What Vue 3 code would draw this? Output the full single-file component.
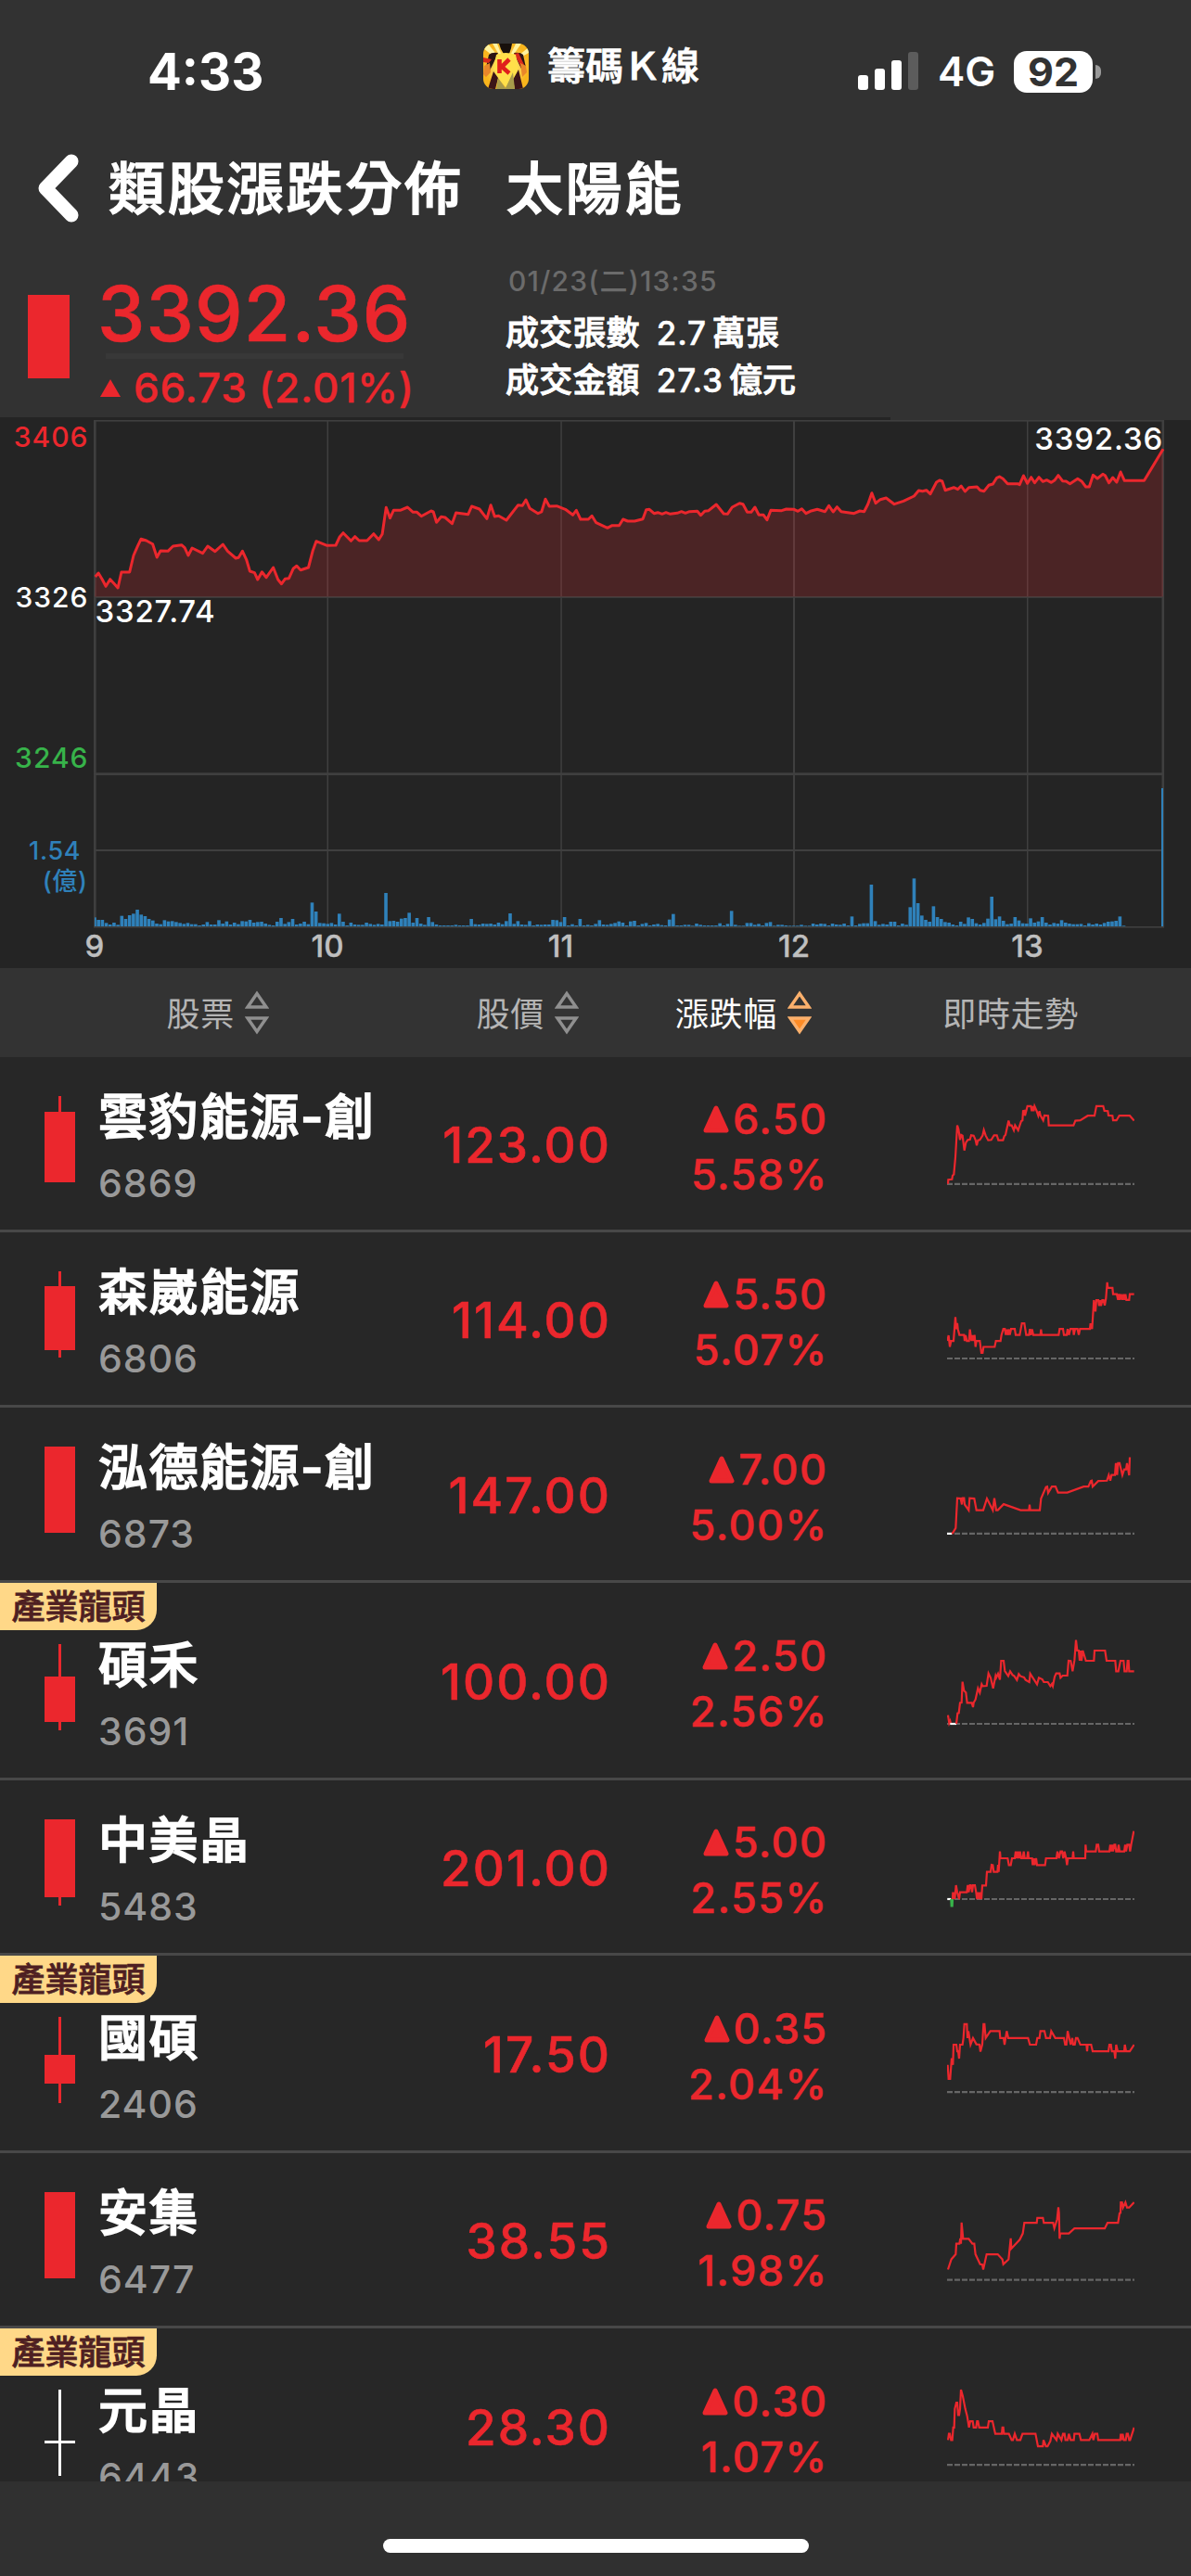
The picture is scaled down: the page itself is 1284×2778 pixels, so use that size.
<script setup>
// Intraday index line: [x, y] samples, each session half with its own horizontal scale
const early = '244,546 252,534 262,555 271,577 282,554 292,568 302,582 311,531 332,531 342,477 352,448 361,424 375,429 391,440 402,483 411,462 430,463 443,447 465,443 473,452 482,477 492,453 519,470 532,447 551,464 571,441 583,463 604,486 611,484 621,463 631,490 640,528 652,533 660,555 671,530 682,548 700,516 712,555 721,569 730,553 740,551 751,520 760,511 770,524 790,516 801,462 810,431 838,445 860,444 870,417 879,404 899,430 909,416 920,429 940,429 957,407 970,426 979,408 989,322 999,356 1008,331 1025,331 1044,321 1058,337 1068,337 1079,350 1104,333 1110,336 1118,370 1130,352 1140,354 1158,374 1168,339 1199,344 1208,318 1228,327 1247,358 1257,314 1267,351 1277,349 1297,363 1327,314 1338,316 1347,297 1357,325 1378,341 1387,336 1397,295 1407,318 1426,317 1448,328 1467,346 1476,331 1487,360 1507,360 1516,349 1527,371 1556,388'
const late = '72,380 90,380 100,360 112,366 130,366 151,359 160,329 168,328 180,341 190,338 201,343 211,338 222,343 240,340 251,335 261,340 272,335 292,334 301,347 311,334 321,332 341,312 360,342 370,343 382,321 401,308 410,311 421,337 431,337 441,321 451,346 463,346 472,362 482,331 510,332 522,327 542,328 552,334 562,326 573,341 584,334 602,328 622,335 632,316 643,336 653,320 664,335 697,341 712,333 723,335 733,311 743,275 753,308 765,296 780,291 801,311 825,301 852,285 864,267 874,269 884,266 894,278 910,240 918,234 925,237 933,266 955,257 965,263 974,252 984,270 994,257 1015,255 1023,266 1033,269 1045,250 1056,246 1066,226 1073,222 1082,229 1094,245 1120,245 1125,248 1135,219 1145,244 1155,224 1164,242 1175,224 1185,238 1195,233 1207,241 1216,233 1225,218 1236,236 1245,237 1255,245 1275,229 1286,238 1296,255 1305,255 1315,217 1326,228 1340,214 1346,218 1356,242 1366,225 1376,240 1386,207 1396,235 1447,235 1496,133'
const project = (pts, left, scale) =>
  pts.split(' ').map((p) => {
    const [x, y] = p.split(',').map(Number)
    return `${(left + x / scale).toFixed(1)},${(440 + y / 3).toFixed(1)}`
  }).join(' ')
const indexLine = project(early, 0, 1568 / 660) + ' ' + project(late, 630, 1568 / 654)
const indexArea = `102,643.5 ${indexLine} 1254,643.5`

// One-minute volume bars from 09:00
const volume = [598, 606, 606, 616, 621, 615, 622, 593, 603, 591, 586, 573, 589, 594, 603, 608, 618, 620, 607, 611, 610, 613, 616, 619, 616, 620, 620, 624, 621, 613, 621, 621, 607, 618, 611, 621, 615, 620, 610, 611, 606, 615, 613, 612, 618, 622, 624, 612, 600, 619, 613, 603, 621, 618, 612, 620, 550, 579, 616, 617, 619, 616, 621, 586, 612, 624, 615, 621, 622, 622, 615, 619, 622, 619, 621, 519, 610, 609, 612, 602, 600, 583, 615, 600, 618, 622, 597, 613, 621, 624, 624, 624, 624, 622, 624, 624, 624, 603, 620, 621, 618, 619, 618, 621, 615, 620, 610, 585, 619, 610, 621, 622, 610, 624, 621, 622, 621, 621, 606, 607, 613, 597, 624, 620, 624, 603, 624, 622, 624, 619, 607, 621, 622, 619, 616, 611, 615, 624, 611, 609, 624, 619, 616, 624, 621, 619, 623, 624, 605, 587, 624, 624, 622, 622, 625, 618, 622, 624, 624, 624, 624, 617, 624, 619, 577, 622, 625, 625, 616, 616, 622, 619, 624, 616, 613, 625, 622, 622, 624, 625, 625, 625, 622, 625, 625, 618, 621, 618, 619, 624, 618, 621, 622, 618, 624, 595, 624, 619, 617, 617, 492, 610, 622, 619, 621, 612, 612, 624, 618, 622, 565, 472, 552, 592, 606, 612, 562, 597, 603, 613, 615, 621, 624, 612, 619, 598, 603, 617, 621, 616, 602, 531, 604, 595, 609, 620, 618, 597, 608, 617, 618, 601, 615, 611, 597, 615, 621, 616, 618, 607, 615, 618, 620, 620, 619, 624, 617, 621, 618, 621, 616, 612, 611, 609, 595, 625]
const bars = volume.map((v, i) => {
  const x = 102 + 4.187 * i
  const left = Math.max(x - 1.8, 102)
  return { x: left, w: x + 1.8 - left, h: (627 - v) / 3 }
})
const hours = [[9, 102], [10, 353], [11, 604.5], [12, 856], [13, 1107.5]]

const columns = [
  { label: '股票', sort: 'idle' },
  { label: '股價', sort: 'idle' },
  { label: '漲跌幅', sort: 'desc' },
  { label: '即時走勢' },
]

const stocks = [
  { name: '雲豹能源-創', code: '6869', price: '123.00', diff: '6.50', pct: '5.58%', wick: [0, 93], body: [17, 93], box: [-28, 520.8], base: 355,
    lines: [['up', '126,355 127,342 139,341 141,330 145,326 150,275 156,178 160,190 165,222 169,207 173,209 179,254 184,230 190,222 197,221 201,208 209,209 215,222 219,239 223,223 229,222 238,209 242,192 248,209 256,223 266,222 275,208 284,208 289,223 304,223 308,211 312,207 322,164 326,178 332,178 339,193 343,178 353,193 363,165 367,163 369,135 373,134 375,149 383,120 394,120 397,135 400,120 403,135 406,120 413,135 418,149 422,135 425,148 434,163 438,148 450,149 452,178 532,178 538,164 554,163 578,149 600,149 606,120 628,120 632,134 643,135 645,148 658,149 660,163 671,163 680,149 714,149 728,164']] },
  { name: '森崴能源', code: '6806', price: '114.00', diff: '5.50', pct: '5.07%', wick: [0, 93], body: [16, 85], box: [501.2, 520.8], base: 882,
    lines: [['up', '124,829 128,812 132,847 136,829 144,829 150,757 153,793 156,775 158,793 163,811 178,811 180,829 183,812 187,829 194,829 197,794 202,829 205,812 209,829 212,811 215,847 218,829 229,829 234,865 238,865 241,847 277,847 281,829 296,829 299,811 305,793 310,793 313,811 316,794 319,811 323,794 326,811 330,793 342,793 345,811 358,811 365,776 373,776 379,811 388,811 391,793 394,811 398,794 402,811 425,811 427,794 429,811 484,811 487,793 498,793 501,811 510,811 513,793 517,811 522,793 531,793 533,811 537,793 545,793 549,811 553,793 585,793 587,776 592,793 598,706 603,740 606,706 612,706 615,723 618,706 621,723 625,706 629,706 633,722 637,700 641,652 643,669 658,669 660,688 672,688 676,705 679,687 682,705 686,688 690,705 694,688 697,705 700,688 703,705 712,705 714,688 728,688']] },
  { name: '泓德能源-創', code: '6873', price: '147.00', diff: '7.00', pct: '5.00%', wick: [0, 93], body: [0, 93], box: [1030.4, 520.8], base: 1411,
    lines: [['flat', '123,1411 138,1411'], ['up', '139,1411 142,1408 151,1394 156,1304 167,1305 171,1323 173,1304 178,1304 180,1323 193,1340 196,1304 211,1305 218,1340 240,1340 252,1305 271,1340 276,1304 282,1340 287,1340 306,1322 361,1340 388,1340 390,1323 392,1340 423,1340 427,1305 443,1270 447,1269 450,1288 462,1269 474,1269 482,1287 512,1287 565,1269 580,1269 588,1252 591,1251 594,1269 612,1252 640,1251 646,1234 651,1251 655,1234 666,1234 669,1198 673,1234 676,1198 681,1198 690,1234 696,1217 702,1217 705,1198 712,1235 714,1180']] },
  { name: '碩禾', leader: true, code: '3691', price: '100.00', diff: '2.50', pct: '2.56%', wick: [0, 93], body: [35, 84], box: [-39, 630], base: 417,
    lines: [['up', '126,389 130,415 133,408 135,417'], ['flat', '133,417 153,417'], ['up', '153,417 157,383 161,382 165,349 170,348 173,281 178,310 184,316 188,349 203,349 207,363 209,349 215,338 223,302 229,316 235,289 238,295 251,294 257,254 264,268 272,302 280,262 282,268 288,255 294,274 298,213 306,213 310,246 321,262 327,247 335,259 340,262 349,275 355,256 361,263 372,267 377,275 389,282 392,255 414,289 420,268 431,273 436,282 449,282 457,295 462,288 465,295 471,265 476,254 487,254 490,268 497,261 512,261 516,213 523,214 529,247 535,212 540,146 544,180 549,180 552,213 555,180 558,213 562,180 572,213 598,213 600,180 634,180 639,213 667,213 670,247 677,247 684,213 694,213 697,247 704,247 707,213 710,213 712,247 728,247']] },
  { name: '中美晶', code: '5483', price: '201.00', diff: '5.00', pct: '2.55%', wick: [0, 93], body: [0, 84], box: [600, 558], base: 984,
    lines: [['flat', '124,984 135,984'], ['down', '136,984 137,1006 140,1006 141,984'], ['up', '141,984 142,962 144,984 147,962 148,984 152,939 156,962 162,984 165,962 187,962 190,939 193,962 197,939 200,939 204,962 207,939 213,939 217,962 220,984 224,962 228,984 231,962 234,984 237,940 249,940 252,896 264,896 267,873 271,874 274,896 286,896 288,873 290,896 294,830 296,852 319,852 323,874 329,874 333,852 342,852 345,830 349,852 352,830 356,852 359,830 363,852 368,852 371,830 374,852 382,852 385,830 387,852 398,852 400,874 404,852 406,874 411,852 414,874 440,874 443,852 477,852 480,830 485,852 490,830 495,830 499,852 503,830 508,852 511,874 514,852 529,852 531,830 533,852 570,852 571,808 573,830 604,830 607,808 612,808 615,830 648,830 651,808 654,830 657,808 660,830 664,808 667,808 670,830 675,830 678,808 681,830 696,830 699,808 702,830 706,808 712,808 715,830 719,805 727,764']] },
  { name: '國碩', leader: true, code: '2406', price: '17.50', diff: '0.35', pct: '2.04%', wick: [0, 93], body: [41, 72], box: [-86.8, 588], base: 325,
    lines: [['up', '125,243 128,285 133,285 138,223 142,243 144,182 153,182 156,202 159,202 162,224 165,182 173,182 176,162 179,120 187,120 189,162 192,141 199,182 207,162 218,181 228,182 231,203 237,181 241,120 244,120 248,162 263,141 293,141 295,162 306,162 309,182 316,141 321,162 385,162 391,182 411,182 415,162 422,162 425,141 438,141 443,162 456,162 460,141 473,162 501,162 505,182 509,182 513,141 523,182 528,162 531,182 536,182 540,162 545,162 554,182 574,182 576,202 578,182 589,182 594,202 645,202 648,182 653,182 656,202 664,202 667,224 670,182 675,202 696,202 698,182 702,202 714,202 728,182']] },
  { name: '安集', code: '6477', price: '38.55', diff: '0.75', pct: '1.98%', wick: [0, 93], body: [0, 93], box: [509.6, 520.8], base: 892,
    lines: [['up', '126,861 137,830 151,815 153,783 163,783 166,767 168,783 170,719 175,768 193,768 205,783 211,783 215,815 230,845 237,846 240,861 251,815 287,815 302,830 305,845 322,830 329,767 331,798 358,771 368,752 373,720 413,720 415,705 433,705 436,720 466,720 470,736 479,709 483,673 485,690 487,768 489,752 517,752 535,737 633,737 642,720 676,720 681,691 684,690 685,658 689,658 692,674 700,658 705,674 712,674 728,658']] },
  { name: '元晶', leader: true, code: '6443', price: '28.30', diff: '0.30', pct: '1.07%', doji: true, wick: [0, 93], body: [55, 58], box: [1038.8, 588], base: 1451,
    lines: [['up', '126,1376 129,1357 132,1357 136,1376 140,1376 143,1338 146,1338 148,1282 153,1263 156,1263 159,1300 162,1300 165,1282 168,1224 174,1244 182,1282 188,1303 194,1338 198,1319 206,1319 209,1338 217,1338 220,1319 223,1319 227,1338 255,1338 258,1319 270,1319 279,1357 300,1357 302,1338 305,1338 307,1357 323,1357 332,1376 336,1376 342,1357 349,1376 360,1376 367,1357 409,1357 417,1395 433,1395 435,1376 443,1395 448,1395 457,1379 462,1357 477,1376 481,1357 493,1376 498,1357 503,1357 506,1376 513,1376 517,1357 523,1376 533,1376 535,1357 551,1357 556,1376 583,1376 593,1357 596,1376 601,1357 609,1357 612,1376 683,1376 685,1357 688,1376 691,1357 695,1376 701,1376 704,1357 708,1357 712,1376 715,1376 728,1338']] },
]
</script>

<template>
  <div class="screen">
    <header class="status">
      <span class="time">4:33</span>
      <div class="app">
        <svg class="app-icon" viewBox="0 0 49 49">
          <defs>
            <clipPath id="icon-clip"><rect width="49" height="49" rx="11" /></clipPath>
            <radialGradient id="icon-bg"><stop offset="0" stop-color="#fff59a" /><stop offset="1" stop-color="#f9b51c" /></radialGradient>
          </defs>
          <g clip-path="url(#icon-clip)">
            <rect width="49" height="49" fill="url(#icon-bg)" />
            <path d="M24 24L0 5V0h5zM24 24L10 0h5zM24 24L35 0h6zM24 24L49 4v6z" fill="#fff3a0" />
            <path d="M17 0h14l-1 5-2 6h-6l-3-5z" fill="#17100c" />
            <path d="M6 12q3-3 10-2l-5 11-4 8-4-3z" fill="#2b1513" />
            <path d="M43 12q-3-3-10-2l5 11 4 8 4-3z" fill="#2b1513" />
            <path d="M0 15l9 2-3 4-6-1zM33 11l5-1 8 17-3 2z" fill="#d92a1c" />
            <path d="M1 24l6-3 1 10-5 5-3-3zM40 21l6 3 1 7-5 5z" fill="#e9862a" />
            <path d="M14 12q10-4 21 0l3 15-4 10-10 10-9-11-4-9z" fill="#ffe04a" />
            <path d="M11 30l5 7-3 12H5zM38 28l-6 11 2 10h9z" fill="#3c1518" />
            <path d="M16 37l8 11 8-17 2 18H14z" fill="#a89b4b" />
            <path d="M17.500 17v15M28 17l-8 8 8 7" stroke="#e01f1c" stroke-width="4.6" fill="none" />
          </g>
        </svg>
        <span>籌碼Ｋ線</span>
      </div>
      <div class="radio">
        <svg width="65" height="42" viewBox="0 0 65 42">
          <g fill="#fff">
            <rect y="25" width="11" height="16" rx="3" />
            <rect x="18" y="18" width="11" height="23" rx="3" />
            <rect x="36" y="9" width="11" height="32" rx="3" />
            <rect x="54" width="11" height="41" rx="3" fill="#5c5c5c" />
          </g>
        </svg>
        <span class="net">4G</span>
        <span class="battery">92</span>
        <i class="nub"></i>
      </div>
    </header>

    <nav class="title">
      <svg width="46" height="74" viewBox="0 0 46 74"><path d="M37 8L9 37l28 29" fill="none" stroke="#fff" stroke-width="15" stroke-linecap="round" stroke-linejoin="round" /></svg>
      <h1>類股漲跌分佈</h1>
      <h1 class="sector">太陽能</h1>
    </nav>

    <section class="quote">
      <i class="block"></i>
      <div class="level">
        <div class="value">3392.36</div>
        <i class="rule"></i>
        <div class="change">
          <svg width="22" height="19" viewBox="0 0 22 19"><path d="M11 0l11 19H0z" fill="#eb272d" /></svg>
          <span>66.73 (2.01%)</span>
        </div>
      </div>
      <div class="facts">
        <div class="stamp">01/23(二)13:35</div>
        <div class="fact"><span>成交張數</span><b>2.7</b><span>萬張</span></div>
        <div class="fact"><span>成交金額</span><b>27.3</b><span>億元</span></div>
      </div>
    </section>

    <svg class="chart" viewBox="0 450 1284 594">
      <rect x="960" y="450" width="324" height="3" fill="#323232" />
      <g fill="#3f3f3f">
        <rect x="101" y="453" width="1154" height="1.6" />
        <rect x="101" y="453" width="2.6" height="547" />
        <rect x="1252.5" y="453" width="2.6" height="547" />
        <rect x="352.5" y="453" width="1.5" height="546" />
        <rect x="604.3" y="453" width="1.5" height="546" />
        <rect x="855" y="453" width="2" height="546" />
        <rect x="1107" y="453" width="1.5" height="546" />
        <rect x="101" y="643" width="1153" height="1.8" />
        <rect x="101" y="833.3" width="1153" height="2.8" />
        <rect x="101" y="916" width="1153" height="2" />
        <rect x="101" y="999" width="1154" height="1.6" />
      </g>
      <polygon :points="indexArea" fill="#eb272d" fill-opacity="0.2" />
      <polyline :points="indexLine" fill="none" stroke="#eb272d" stroke-width="3" stroke-linejoin="round" />
      <g fill="#2f81ba">
        <rect v-for="(b, i) in bars" :key="i" :x="b.x" :y="999 - b.h" :width="b.w" :height="b.h" />
        <rect x="1252" y="850" width="2" height="149" />
      </g>
      <g class="scale" text-anchor="end">
        <text x="95.5" y="482" fill="#eb272d">3406</text>
        <text x="95.5" y="655" fill="#fff">3326</text>
        <text x="95.5" y="828" fill="#37b34a">3246</text>
        <text x="87" y="926.5" class="vol">1.54</text>
        <text x="94.5" y="959.5" class="vol">(億)</text>
      </g>
      <g class="mark">
        <text x="102.5" y="671">3327.74</text>
        <text x="1254" y="485" text-anchor="end">3392.36</text>
      </g>
      <g class="hours" text-anchor="middle">
        <text v-for="[h, x] in hours" :key="h" :x="x" y="1032">{{ h }}</text>
      </g>
    </svg>

    <div class="columns">
      <div v-for="c in columns" :key="c.label" class="column" :class="c.sort">
        <span>{{ c.label }}</span>
        <svg v-if="c.sort" width="26" height="50" viewBox="0 0 26 50">
          <path d="M13 4.500l10 14.500H3z" />
          <path class="desc-mark" d="M13 45.500l10-14.500H3z" />
        </svg>
      </div>
    </div>

    <main class="list">
      <article v-for="s in stocks" :key="s.code" class="row" :class="{ tall: s.leader }">
        <span v-if="s.leader" class="badge">產業龍頭</span>
        <div class="who">
          <svg class="candle" :class="{ doji: s.doji }" width="33" height="93" viewBox="0 0 33 93">
            <rect x="15" :y="s.wick[0]" width="3" :height="s.wick[1] - s.wick[0]" />
            <rect :y="s.body[0]" width="33" :height="s.body[1] - s.body[0]" />
          </svg>
          <div>
            <div class="name">{{ s.name }}</div>
            <div class="code">{{ s.code }}</div>
          </div>
        </div>
        <div class="price">{{ s.price }}</div>
        <div class="delta">
          <div class="diff">
            <svg width="28" height="30" viewBox="0 0 28 30"><path d="M14 3l11 24H3z" fill="#eb272d" stroke="#eb272d" stroke-width="5" stroke-linejoin="round" /></svg>
            <span>{{ s.diff }}</span>
          </div>
          <div>{{ s.pct }}</div>
        </div>
        <svg class="spark" preserveAspectRatio="none" :viewBox="`123 ${s.box[0]} 606 ${s.box[1]}`">
          <path class="base" :d="`M123 ${s.base}H729`" />
          <polyline v-for="([tone, pts], i) in s.lines" :key="i" :class="tone" :points="pts" />
        </svg>
      </article>
    </main>

    <footer><i class="home"></i></footer>
  </div>
</template>

<style>
body { margin: 0; background: #303030; }
</style>

<style scoped>
.screen {
  width: 1284px;
  height: 2778px;
  overflow: hidden;
  display: flex;
  flex-direction: column;
  background: #323232;
  color: #fff;
  font-family: Inter, "Noto Sans CJK TC", sans-serif;
  font-weight: 500;
}
.screen svg { flex: none; display: block; }
.status { height: 154px; display: flex; align-items: center; flex: none; padding: 0 97px 0 159px; box-sizing: border-box; }
.time { width: 362px; font-size: 54.5px; font-weight: 700; line-height: 60px; }
.app { display: flex; align-items: center; gap: 20px; margin-bottom: 12px; font-size: 41px; line-height: 48px; -webkit-text-stroke: 0.8px; }
.app-icon { width: 49px; height: 49px; }
.radio { display: flex; align-items: center; margin-left: auto; }
.net { font-size: 44px; line-height: 50px; margin-left: 21px; width: 82px; font-weight: 600; }
.battery { width: 85px; height: 45px; border-radius: 14px; background: #fff; color: #323232; font-size: 43px; line-height: 45px; font-weight: 700; text-align: center; }
.nub { width: 6px; height: 15px; margin-left: 3px; border-radius: 0 6px 6px 0; background: #999; }
.title { height: 98px; flex: none; display: flex; align-items: center; padding-left: 40px; }
.title h1 { margin: 2px 0 0 31px; font-size: 61px; letter-spacing: 2.800px; line-height: 80px; font-weight: 500; -webkit-text-stroke: 1.5px; }
.title .sector { margin-left: 46px; }
.quote { height: 198px; flex: none; display: flex; position: relative; }
.block { width: 45px; height: 90px; margin: 66px 0 0 30px; background: #eb272d; }
.level { margin-left: 30px; width: 440px; color: #eb272d; padding-top: 45px; }
.value { font-size: 82px; line-height: 84px; height: 84px; letter-spacing: 1.100px; -webkit-text-stroke: 0.6px; }
.rule { display: block; width: 321px; height: 6px; margin-left: 9px; background: #383838; }
.change { display: flex; align-items: center; gap: 14px; height: 62px; font-size: 44px; letter-spacing: 0.8px; padding-left: 3px; -webkit-text-stroke: 0.4px; }
.facts { padding-top: 31px; }
.stamp { font-size: 30px; line-height: 40px; color: #6b6b6b; letter-spacing: 1.200px; margin: 0 0 10px 3px; }
.fact { display: flex; font-size: 36px; letter-spacing: 0.2px; line-height: 53px; height: 51px; -webkit-text-stroke: 0.9px; }
.fact b { font-weight: 500; margin: 0 6px 0 18px; font-size: 35px; letter-spacing: 0.8px; -webkit-text-stroke: 0.5px; }
.chart { width: 1284px; height: 594px; background: #242424; }
.scale { font-size: 30px; letter-spacing: 1px; }
.vol { font-size: 27px; letter-spacing: 0.6px; fill: #2f81ba; }
.mark { font-size: 33px; letter-spacing: 0.8px; fill: #fff; }
.hours { font-size: 33px; fill: #bfbfbf; stroke: #bfbfbf; stroke-width: 0.4px; }
.columns { height: 96px; flex: none; display: grid; grid-template-columns: 290px 334px 251px 288px; background: #333; }
.column { display: flex; align-items: center; justify-content: flex-end; gap: 11px; font-size: 36px; letter-spacing: 0.7px; font-weight: 400; color: #b5b5b5; }
.column span { margin-top: -3px; }
.column path { fill: none; stroke: #8f8f8f; stroke-width: 3.4; }
.column.desc { color: #fff; }
.column.desc path { stroke: #fbb06c; }
.column.desc .desc-mark { fill: #ff8c26; }
.list { height: 1536px; flex: none; overflow: hidden; background: #272727; }
.row { position: relative; height: 186px; display: grid; grid-template-columns: 440px 217px 234px 332px; align-items: center; border-bottom: 3px solid #484848; }
.row.tall { height: 210px; }
.badge { position: absolute; left: 0; top: 0; width: 169px; height: 51px; border-radius: 0 0 22px 0; background: #ffd888; color: #4e1f22; font-size: 36px; line-height: 53px; text-align: center; -webkit-text-stroke: 0.8px; }
.who { display: flex; align-self: start; padding: 34px 0 0 48px; gap: 25px; }
.tall .who { padding-top: 58px; }
.candle { margin-top: 8px; fill: #eb272d; }
.candle.doji { fill: #fff; }
.name { font-size: 53px; line-height: 63px; letter-spacing: 1.500px; white-space: nowrap; font-weight: 500; -webkit-text-stroke: 1.5px; }
.code { font-size: 41px; letter-spacing: 1px; line-height: 50px; margin-top: 14px; color: #999; }
.price { font-size: 53px; letter-spacing: 2px; line-height: 60px; text-align: right; color: #eb272d; margin-right: -2px; padding-top: 3px; -webkit-text-stroke: 0.6px; }
.delta { font-size: 45px; letter-spacing: 1.400px; line-height: 60px; text-align: right; color: #eb272d; padding-top: 8px; margin-right: -1.500px; -webkit-text-stroke: 0.5px; }
.diff { display: flex; justify-content: flex-end; align-items: center; gap: 4px; }
.spark { width: 202px; height: 100%; justify-self: end; fill: none; stroke-width: 2.2; }
.spark * { vector-effect: non-scaling-stroke; }
.base { stroke: #666; stroke-dasharray: 6 2; }
.up { stroke: #eb272d; }
.down { stroke: #37b34a; }
.flat { stroke: #fff; }
footer { flex: 1; background: #303030; display: flex; justify-content: center; padding-top: 62px; }
.home { width: 459px; height: 15px; border-radius: 8px; background: #fff; }
</style>
